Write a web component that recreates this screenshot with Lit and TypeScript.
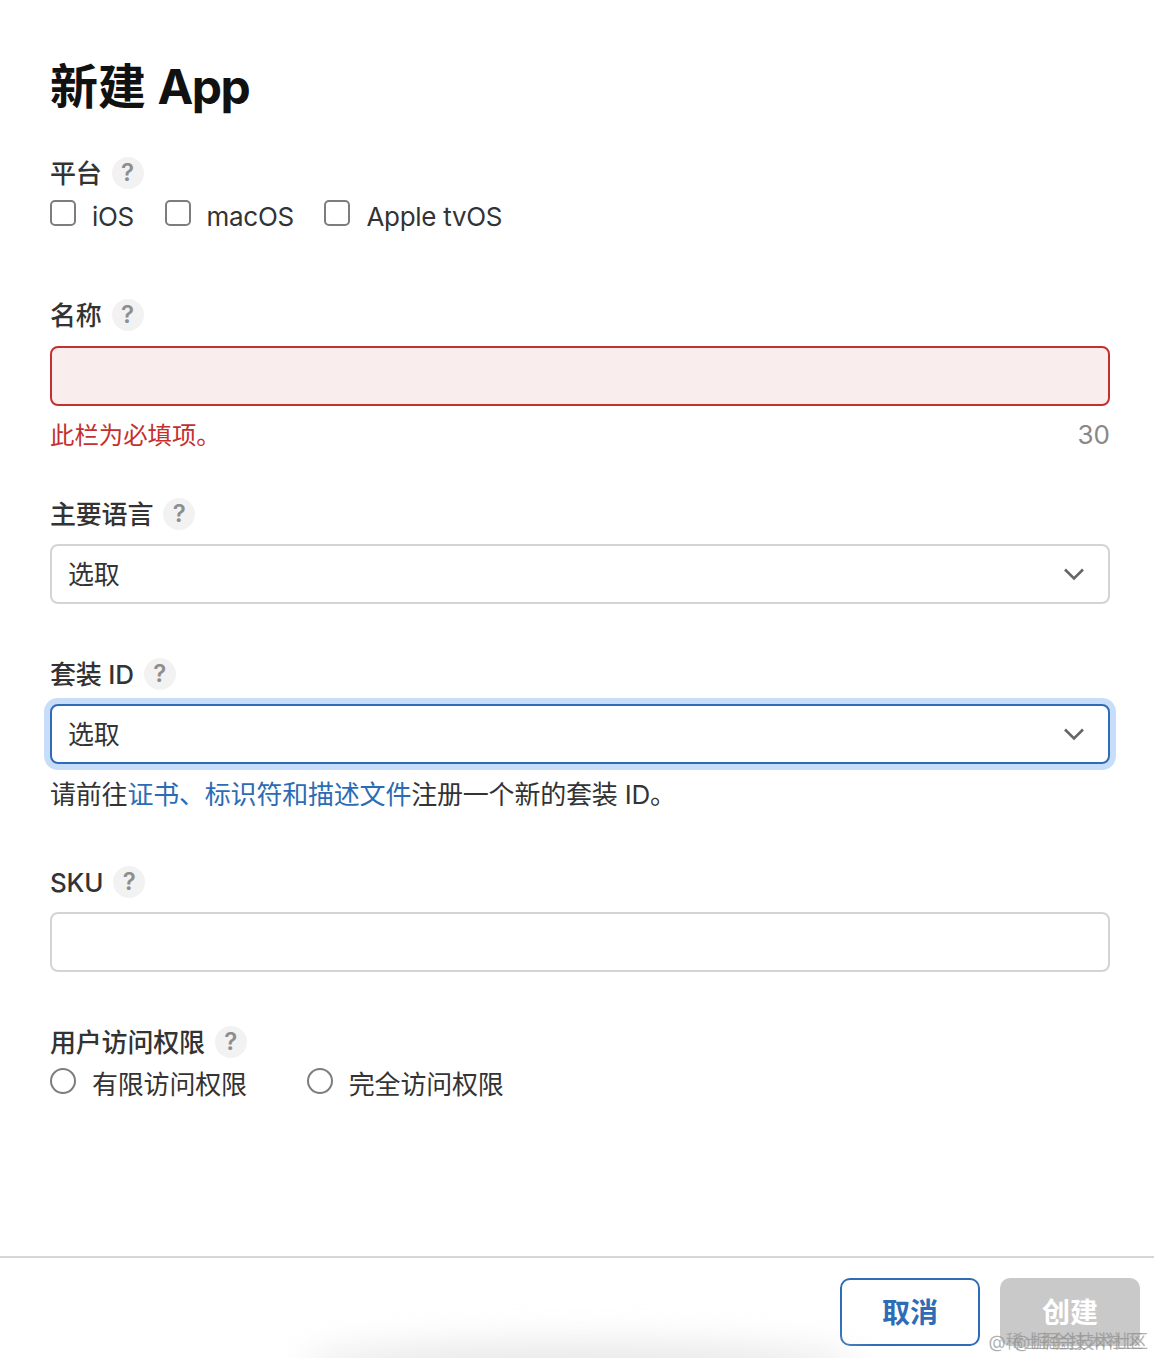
import { LitElement, html, css } from "lit";
import { customElement } from "lit/decorators.js";

const chevron = html`<svg class="chev" width="22" height="14" viewBox="0 0 22 14" fill="none"><path d="M2 2.5 L11 11.5 L20 2.5" stroke="#666" stroke-width="2.6"/></svg>`;

@customElement("app-root")
export class AppRoot extends LitElement {
  static styles = css`
    :host {
      display: flex;
      flex-direction: column;
      position: relative;
      height: 1358px;
      overflow: hidden;
      background: #fff;
      color: #333;
      font-family: Inter, "Liberation Sans", "Noto Sans CJK SC", sans-serif;
      font-size: 26px;
      letter-spacing: -0.2px;
    }
    .form { flex: 1; padding: 57px 44px 0 50px; }
    h1 { margin: 0; height: 60px; line-height: 60px; font-size: 48px; font-weight: 700; color: #111; letter-spacing: 0; }
    .latin { letter-spacing: -1.5px; }
    .label { display: flex; align-items: center; gap: 10px; height: 32px; line-height: 32px; font-weight: 500; }
    .label .txt { padding-top: 2px; }
    .help {
      width: 32px; height: 32px; border-radius: 50%; background: #f2f2f2; color: #8e8e8e;
      font-size: 24px; font-weight: 600; display: flex; align-items: center; justify-content: center; letter-spacing: 0;
    }
    .f1 { margin-top: 40px; }
    .f2 { margin-top: 67px; }
    .f3 { margin-top: 48px; }
    .f4, .f6 { margin-top: 54px; }
    .f5 { margin-top: 56px; }
    .opts { display: flex; align-items: flex-start; margin-top: 11px; line-height: 30px; letter-spacing: -0.3px; }
    .opts.radios { margin-top: 10px; letter-spacing: -0.2px; }
    .opt { display: flex; align-items: flex-start; gap: 16px; margin-right: 30.6px; }
    .opt .txt { padding-top: 2px; }
    .radios .opt { margin-right: 60px; }
    .box { width: 26px; height: 26px; box-sizing: border-box; border: 2px solid #7d7d7d; border-radius: 5px; }
    .radio { border-radius: 50%; }
    .ctl {
      margin-top: 14px; height: 60px; box-sizing: border-box; border: 2px solid #d4d4d4; border-radius: 8px;
      display: flex; align-items: center; justify-content: space-between; padding: 0 23px 0 16px; background: #fff;
    }
    .ctl .txt { padding-bottom: 4px; }
    .ctl.tight { margin-top: 15px; }
    .ctl.err { border-color: #c3302f; background: #faedee; }
    .ctl.focus { border-color: #2e6db5; box-shadow: 0 0 0 6px #c7ddf9; }
    .meta { display: flex; justify-content: space-between; margin-top: 12px; line-height: 30px; padding-top: 2px; }
    .err-text { color: #c3302f; font-size: 24.4px; letter-spacing: 0; }
    .count { color: #888; letter-spacing: 0; }
    .note { margin-top: 14px; line-height: 30px; padding-top: 2px; }
    a { color: #2b6cb4; text-decoration: none; }
    .footer {
      border-top: 2px solid #d6d6d6; height: 102px; box-sizing: border-box; padding: 20px 14px 0 0;
      display: flex; justify-content: flex-end; gap: 20px; position: relative;
    }
    .btn {
      width: 140px; height: 68px; box-sizing: border-box; border-radius: 10px; padding-bottom: 2px;
      display: flex; align-items: center; justify-content: center; font-size: 28px; font-weight: 700; letter-spacing: 0;
    }
    .cancel { border: 2px solid #2e6db5; color: #2e6db5; background: #fff; }
    .create { background: #c9c9c9; color: #fff; }
    .shade {
      position: absolute; left: 300px; width: 560px; bottom: -30px; height: 44px;
      background: #e6e6e6; filter: blur(18px); border-radius: 50%;
    }
    .mark {
      position: absolute; right: 6px; bottom: 5px; font-size: 17.8px; line-height: 22px; color: rgba(150,150,150,.75);
      white-space: nowrap; letter-spacing: 0;
    }
    .mark.b { right: 10px; letter-spacing: 1px; }
  `;

  private label(text: string) {
    return html`<div class="label"><span class="txt">${text}</span><span class="help">?</span></div>`;
  }

  private opt(text: string, radio = false) {
    return html`<div class="opt"><span class="box ${radio ? "radio" : ""}"></span><span class="txt">${text}</span></div>`;
  }

  render() {
    return html`
      <div class="form">
        <h1>新建 <span class="latin">App</span></h1>
        <div class="f1">
          ${this.label("平台")}
          <div class="opts">${this.opt("iOS")}${this.opt("macOS")}${this.opt("Apple tvOS")}</div>
        </div>
        <div class="f2">
          ${this.label("名称")}
          <div class="ctl tight err"></div>
          <div class="meta"><span class="err-text">此栏为必填项。</span><span class="count">30</span></div>
        </div>
        <div class="f3">
          ${this.label("主要语言")}
          <div class="ctl"><span class="txt">选取</span>${chevron}</div>
        </div>
        <div class="f4">
          ${this.label("套装 ID")}
          <div class="ctl focus"><span class="txt">选取</span>${chevron}</div>
          <div class="note">请前往<a>证书、标识符和描述文件</a>注册一个新的套装 ID。</div>
        </div>
        <div class="f5">
          ${this.label("SKU")}
          <div class="ctl"></div>
        </div>
        <div class="f6">
          ${this.label("用户访问权限")}
          <div class="opts radios">${this.opt("有限访问权限", true)}${this.opt("完全访问权限", true)}</div>
        </div>
      </div>
      <div class="footer">
        <div class="shade"></div>
        <div class="btn cancel">取消</div>
        <div class="btn create">创建</div>
        <div class="mark">@稀土掘金技术社区</div>
        <div class="mark b">@掘金技术社区</div>
      </div>
    `;
  }
}
